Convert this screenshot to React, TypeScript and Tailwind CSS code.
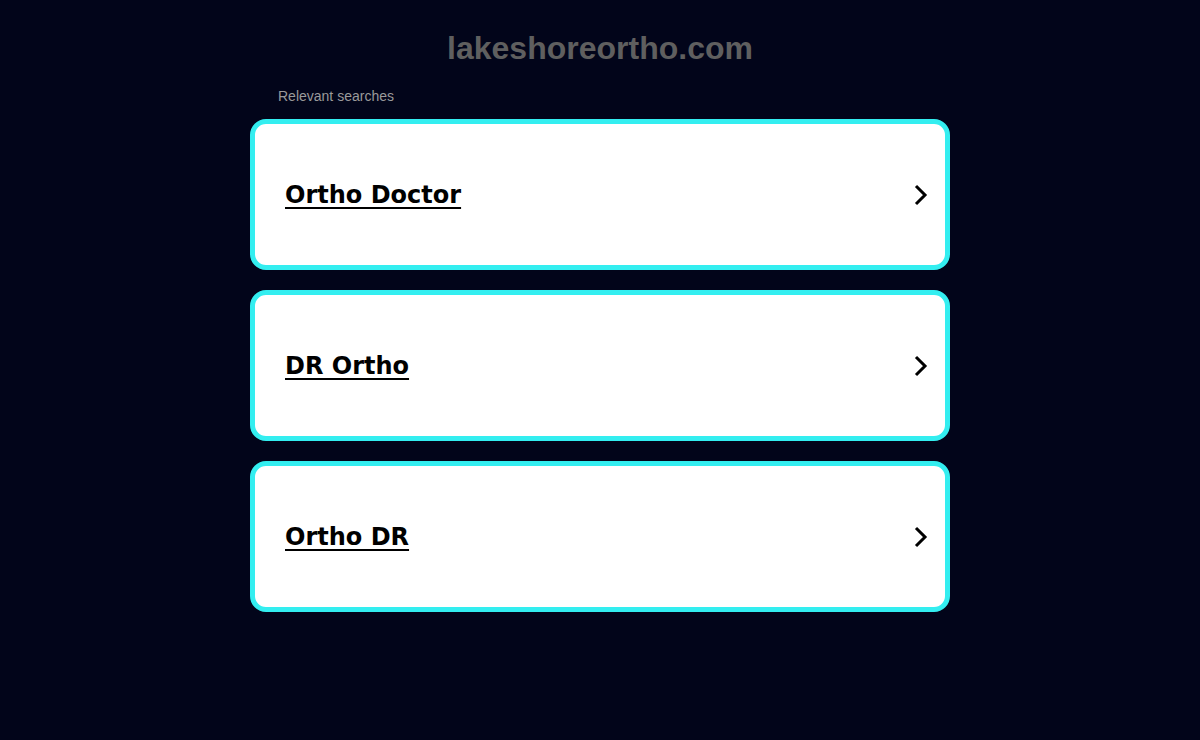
const ITEMS = ["Ortho Doctor", "DR Ortho", "Ortho DR"];

export default function App() {
  return (
    <div className="min-h-[740px] bg-[#02051a] font-['Liberation_Sans',Arial,sans-serif]">
      <div className="mx-auto w-[700px] pt-[28px]">
        <h1 className="text-center text-[32px] font-bold leading-[40px] text-[#5f5f5f]">
          lakeshoreortho.com
        </h1>
        <p className="mt-[20px] pl-[28px] text-[14px] leading-[16px] text-[#9a9a9a]">Relevant searches</p>
        <div className="mt-[15px] flex flex-col gap-[20px]">
          {ITEMS.map((item) => (
            <a
              key={item}
              href="#"
              className="flex h-[151px] items-center justify-between rounded-[16px] border-[5px] border-[#33eef0] bg-white pl-[30px] pr-[16px]"
            >
              <span className="font-['DejaVu_Sans',Verdana,sans-serif] text-[24px] font-bold text-black underline decoration-2 underline-offset-[4px]">
                {item}
              </span>
              <svg width="16" height="24" viewBox="0 0 16 24" fill="none">
                <path d="M3 3l9 9-9 9" stroke="#000" strokeWidth="3" />
              </svg>
            </a>
          ))}
        </div>
      </div>
    </div>
  );
}
